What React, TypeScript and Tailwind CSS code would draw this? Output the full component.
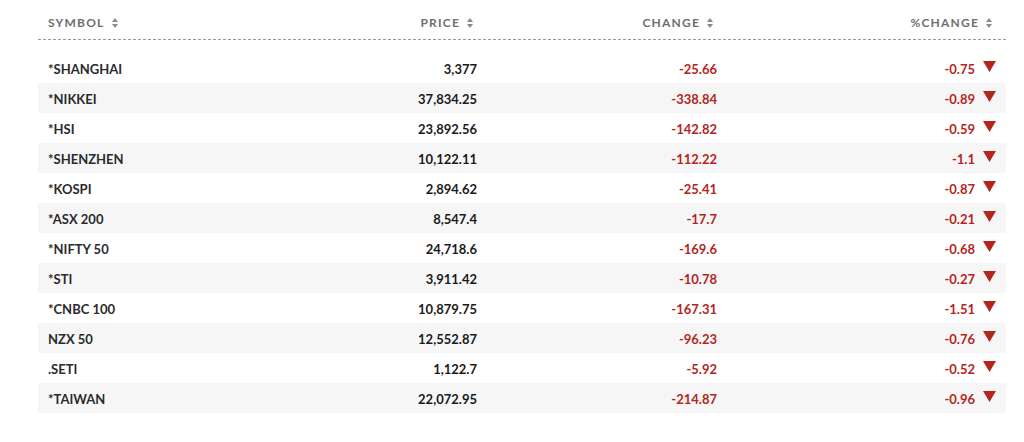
import React from 'react';

const rows = [
  { symbol: '*SHANGHAI', price: '3,377', change: '-25.66', pct: '-0.75' },
  { symbol: '*NIKKEI', price: '37,834.25', change: '-338.84', pct: '-0.89' },
  { symbol: '*HSI', price: '23,892.56', change: '-142.82', pct: '-0.59' },
  { symbol: '*SHENZHEN', price: '10,122.11', change: '-112.22', pct: '-1.1' },
  { symbol: '*KOSPI', price: '2,894.62', change: '-25.41', pct: '-0.87' },
  { symbol: '*ASX 200', price: '8,547.4', change: '-17.7', pct: '-0.21' },
  { symbol: '*NIFTY 50', price: '24,718.6', change: '-169.6', pct: '-0.68' },
  { symbol: '*STI', price: '3,911.42', change: '-10.78', pct: '-0.27' },
  { symbol: '*CNBC 100', price: '10,879.75', change: '-167.31', pct: '-1.51' },
  { symbol: 'NZX 50', price: '12,552.87', change: '-96.23', pct: '-0.76' },
  { symbol: '.SETI', price: '1,122.7', change: '-5.92', pct: '-0.52' },
  { symbol: '*TAIWAN', price: '22,072.95', change: '-214.87', pct: '-0.96' },
];

const SortIcon = () => (
  <svg width="6" height="10" viewBox="0 0 6 10" className="ml-[7px] text-[#8a8a8a]" fill="currentColor">
    <path d="M3 0 L6 4 L0 4 Z" />
    <path d="M0 6 L6 6 L3 10 Z" />
  </svg>
);

const DownArrow = () => (
  <svg width="13" height="11" viewBox="0 0 13 11" className="ml-[8px] -mt-[7px] text-[#b3261e]" fill="currentColor">
    <path d="M0 0 L13 0 L6.5 11 Z" />
  </svg>
);

const App: React.FC = () => {
  return (
    <div className="w-[1024px] h-[442px] bg-white" style={{ fontFamily: 'Lato, "Liberation Sans", sans-serif' }}>
      <div className="ml-[38px] w-[968px] pt-[13px]">
        {/* 헤더 */}
        <div className="grid grid-cols-[200px_249px_240px_279px] h-[20px] items-center text-[12px] font-bold tracking-[1.2px] text-[#6e6e6e]">
          <div className="flex items-center pl-[10px]">
            SYMBOL
            <SortIcon />
          </div>
          <div className="flex items-center justify-end pr-[14px]">
            PRICE
            <SortIcon />
          </div>
          <div className="flex items-center justify-end pr-[14px]">
            CHANGE
            <SortIcon />
          </div>
          <div className="flex items-center justify-end pr-[14px]">
            %CHANGE
            <SortIcon />
          </div>
        </div>
        <div className="mt-[6px] border-t border-dashed border-[#9a9a9a]" />

        {/* 행 */}
        <div className="mt-[13px]">
          {rows.map((r, i) => (
            <div
              key={r.symbol}
              className={`grid grid-cols-[200px_249px_240px_279px] h-[30px] items-center pt-[4px] text-[13px] font-bold ${
                i % 2 === 1 ? 'bg-[#f6f6f6]' : 'bg-white'
              }`}
            >
              <div className="pl-[10px] text-[#2b2b2b]">{r.symbol}</div>
              <div className="text-right pr-[10px] text-[#1a1a1a]">{r.price}</div>
              <div className="text-right pr-[10px] text-[#b3261e]">{r.change}</div>
              <div className="flex items-center justify-end pr-[10px] text-[#b3261e]">
                {r.pct}
                <DownArrow />
              </div>
            </div>
          ))}
        </div>
      </div>
    </div>
  );
};

export default App;
